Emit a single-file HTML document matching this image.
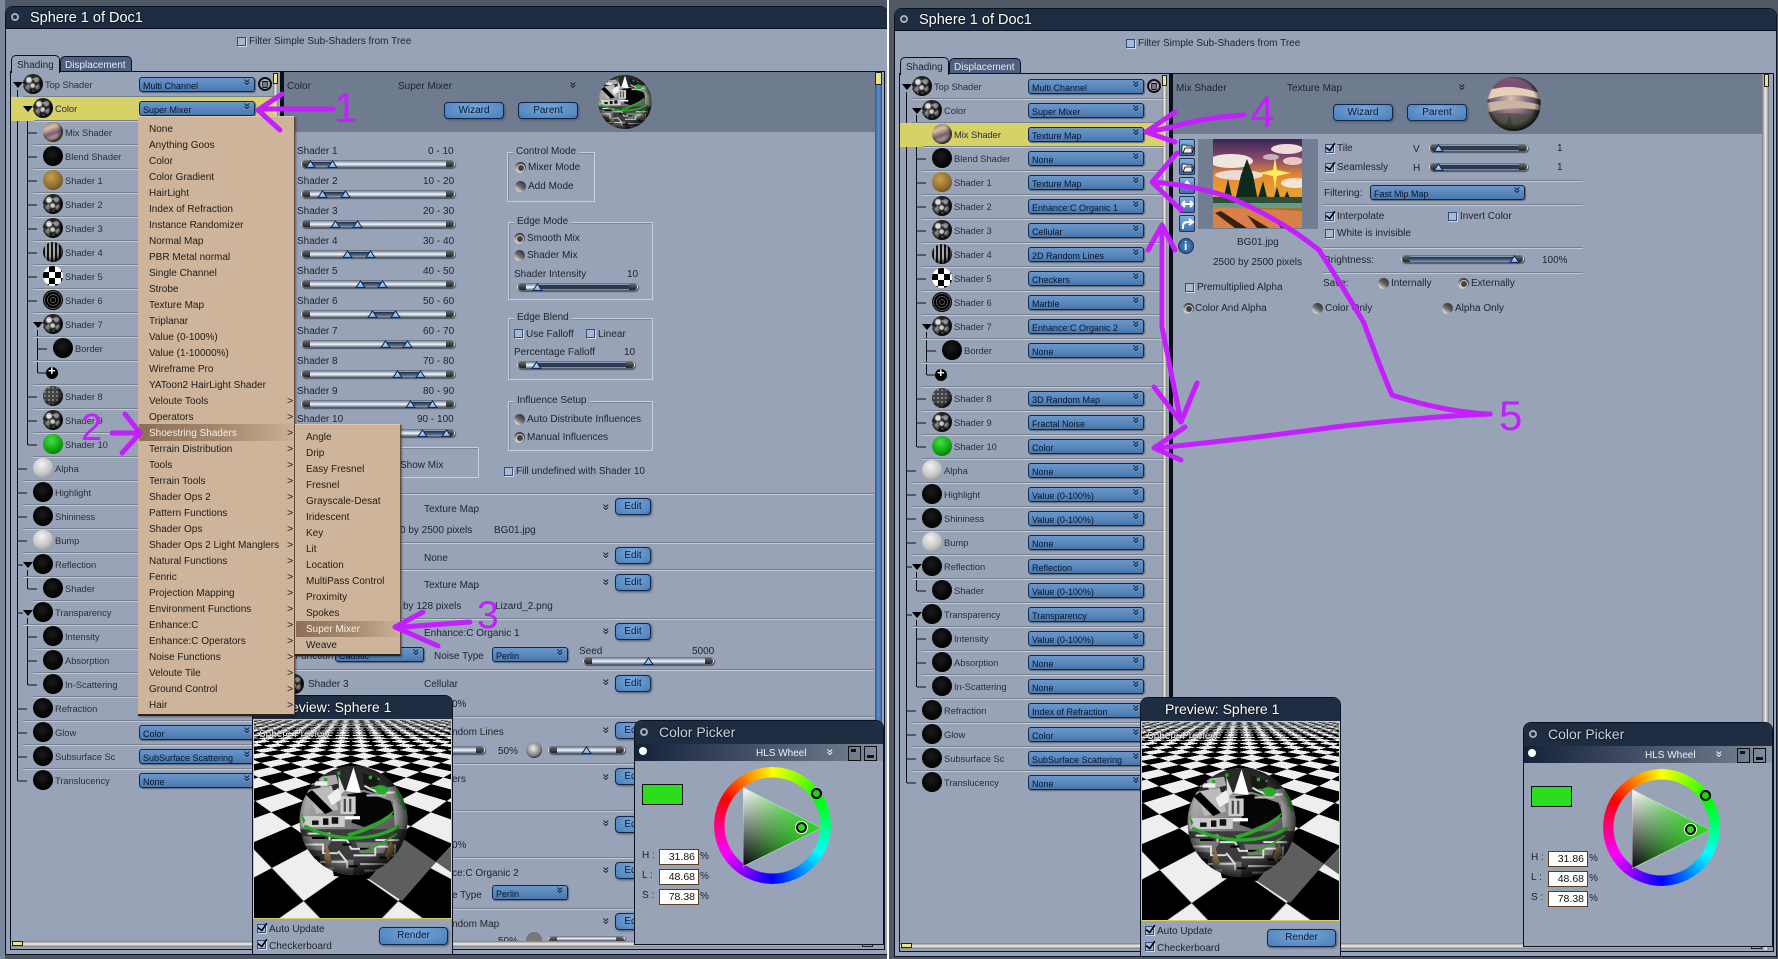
<!DOCTYPE html>
<html><head><meta charset="utf-8"><title>Sphere 1 of Doc1</title>
<style>
*{box-sizing:border-box;margin:0;padding:0}
html,body{width:1778px;height:959px;overflow:hidden;background:#505866;font:10px/14px "Liberation Sans",sans-serif;color:#20252f}
div,span,b,i,svg{position:absolute;display:block}
span{white-space:nowrap;margin-top:1px}
#root{left:0;top:0;width:1778px;height:959px;filter:blur(.35px)}
.w{width:889px;height:957px;top:0}
.win{left:5px;top:6px;width:883px;height:949px;background:#98a3b8;border:1px solid #0b1120;border-radius:8px 8px 0 0}
.tb{left:6px;top:7px;width:881px;height:22px;background:#1f2d42;border-radius:7px 7px 0 0;border-bottom:1px solid #0b1120}
.tt{left:30px;top:9px;color:#fff;font-size:14.5px;line-height:18px;text-shadow:0 0 2px #000;margin-top:0}
.o{width:8px;height:8px;border-radius:50%;border:2px solid #aab;left:11px;top:13px}
.pan{left:10px;top:71px;width:875px;height:879px;border:1px solid #0b1120}
.k{background:#0c0f16}
.r{left:0;width:275px;height:24px}
.r::after{content:"";position:absolute;left:23px;right:0;top:23px;height:2px;background:linear-gradient(#76818f 50%,#c3cbdb 50%)}
.r.d2::after{left:33px}
.r.nl::after{display:none}
.r.y{background:#d6d268;left:11px}
.r span{top:5px;color:#2a3039;font-size:9.4px;letter-spacing:-.05px;margin-top:0}
.s{top:1px;width:20px;height:20px;border-radius:50%;background:radial-gradient(circle at 45% 40%,#1a1a1a,#000 70%)}
.wh{background:radial-gradient(circle at 42% 32%,#f2f2f2,#c4c4c4 55%,#777)}
.gr{background:radial-gradient(circle at 42% 32%,#44e044,#0fa50f 55%,#064f06)}
.n{background:radial-gradient(circle at 30% 30%,#ddd 0 10%,transparent 20%),radial-gradient(circle at 68% 28%,#999 0 9%,transparent 18%),radial-gradient(circle at 48% 58%,#ccc 0 10%,transparent 20%),radial-gradient(circle at 22% 68%,#888 0 8%,transparent 16%),radial-gradient(circle at 74% 68%,#aaa 0 8%,transparent 16%),radial-gradient(circle,#888 0 18%,transparent 36%) 3px 2px/5px 6px,#242424;box-shadow:inset -2px -2px 4px #000}
.n2{background:radial-gradient(circle,#bbb 0 16%,transparent 40%) 0 0/4px 4px,#444;box-shadow:inset -2px -2px 4px #000}
.tan{background:radial-gradient(circle at 40% 35%,#c9a04c,#8a6a2c 60%,#3a2c10)}
.st{background:repeating-linear-gradient(90deg,#111 0 2px,#aaa 2px 4px);box-shadow:inset -2px -2px 4px #000}
.ch{background:repeating-conic-gradient(#000 0 25%,#fff 0 50%) 0 0/12px 12px}
.ma{background:repeating-radial-gradient(circle at 50% 50%,#000 0 2px,#555 2px 3px)}
.mx{background:linear-gradient(160deg,#8a6a80,#d8c0a0 30%,#7c5a78 55%,#c8b090 75%,#3a4038);box-shadow:inset -2px -2px 3px #222}
.dd{left:139px;top:4px;width:116px;height:15px;border:1px solid #12274a;border-radius:3px;background:linear-gradient(#6a97cc,#4a78ad);padding-left:3px;line-height:17px;font-size:9px;color:#08162c;overflow:hidden;box-shadow:1px 1px 1px #5a6578}
.dd::after{content:"»";position:absolute;right:3px;top:-3px;font-size:12px;line-height:14px;transform:rotate(90deg);color:#06122a}
.cv{font-size:12px;line-height:12px;transform:rotate(90deg);color:#111;margin-top:0}
.btn{border:1px solid #12274a;border-radius:4px;background:radial-gradient(ellipse at 50% 30%,#78a8dc,#4a7db8);text-align:center;line-height:16px;color:#0a1a33;box-shadow:1px 1px 2px #4a5568}
.hd{left:284px;top:72px;width:591px;height:60px;background:#6f7b8f}
.sl{height:8px;border-radius:4px;background:linear-gradient(#5c6678,#c8d4e6 40%,#f6f9ff 52%,#3d475a);box-shadow:1px 1px 1px #4a5464}
.sl::before,.sl::after{content:"";position:absolute;top:1px;width:8px;height:6px;background:linear-gradient(#666,#222);border-radius:3px 0 0 3px;left:1px}
.sl::after{left:auto;right:1px;border-radius:0 3px 3px 0}
.tr{top:0;width:11px;height:8px;background:#122c55;clip-path:polygon(50% 0,100% 100%,0 100%);z-index:2}
.tr::after{content:"";position:absolute;left:2px;top:2px;width:7px;height:5px;background:linear-gradient(#e8f4ff,#6da5e0);clip-path:polygon(50% 0,100% 100%,0 100%)}
.rg{top:2px;height:4px;background:linear-gradient(#1d2c45,#5a7aa5)}
.g{border:1px solid #c8d0de;box-shadow:inset 1px 1px 0 #7c8799}
.lg{background:#98a3b8;padding:0 3px}
.ra{width:11px;height:11px;border-radius:50%;background:linear-gradient(35deg,#f4f4f4 8%,#666 50%,#222)}
.ra.on::after{content:"";position:absolute;left:2px;top:2px;width:6px;height:6px;border-radius:50%;background:#444;border:1px solid #ccc}
.cb{width:9px;height:9px;border:1.5px solid #2f4f80;background:#a9b9d2;box-shadow:1px 1px 0 #d5dbe6}
.cb.on::after{content:"";position:absolute;left:1px;top:-5px;width:5px;height:10px;border-right:2px solid #000;border-bottom:2px solid #000;transform:rotate(35deg) scale(.8)}
.ln{height:2px;background:linear-gradient(#76818f 50%,#c3cbdb 50%)}
.hs{left:11px;top:941px;width:862px;height:6px;background:linear-gradient(#777,#f2f2f2 50%,#777)}
.th{background:#e8e48a;border:1px solid #222}
.blue{left:875px;top:84px;width:7px;height:860px;background:linear-gradient(90deg,#2d5a94,#5f91cc 50%,#2d5a94)}
.menu{background:#cdb49b;border-top:1px solid #ddc8b2;border-right:1px solid #5e4a38;border-bottom:2px solid #2c231b;box-shadow:1px 1px 2px #0006}
.m{left:11px;color:#1f1c18;font-size:10px}
.ar{left:149px;font-size:10.5px;color:#1f1c18}
.hl{background:linear-gradient(90deg,#8c6f56,#a68a70 55%,#c9b097)}
.pv{left:252px;top:695px;width:201px;height:260px;background:#98a3b8;border:1px solid #0b1120;border-radius:8px 8px 0 0;overflow:hidden}
.pt{left:0;top:0;width:199px;height:23px;background:#1f2d42}
.ptt{left:24px;top:2px;color:#fff;font-size:14px;line-height:18px;text-shadow:0 0 2px #000;margin-top:0}
.pa{left:0;top:23px;width:199px;height:200px;overflow:hidden;border:1px solid #d8d060;background:#999}
.pl{left:-1919px;top:-1868px;width:4032px;height:4032px;background:repeating-conic-gradient(#eee 0 25%,#000 0 50%) 0 0/112px 112px;transform:perspective(173px) rotateX(45.6deg) rotateZ(45deg);filter:blur(.7px)}
.cp{left:634px;top:720px;width:250px;height:225px;background:#98a3b8;border:1px solid #0b1120;border-radius:8px 8px 0 0;overflow:hidden}
.cp span{margin-top:0}
.in{left:24px;width:40px;height:16px;background:#fff;border:1px solid #5a3e22;text-align:right;padding-right:3px;line-height:15px;font-size:10.5px;color:#111}
.ic{left:0;width:16px;height:17px;background:linear-gradient(#7fb0e4,#3f6ea8);border:1px solid #1c355e;border-radius:2px}
</style></head><body>
<svg width="0" height="0" style="left:0;top:0"><defs>
<linearGradient id="og" x1="0" y1="0" x2="1" y2="1"><stop offset="0" stop-color="#ccc"/><stop offset=".5" stop-color="#777"/><stop offset="1" stop-color="#333"/></linearGradient>
<radialGradient id="ov" cx=".47" cy=".45" r=".56"><stop offset=".75" stop-color="#000" stop-opacity="0"/><stop offset="1" stop-color="#000" stop-opacity=".8"/></radialGradient>
<clipPath id="oc"><ellipse cx="50" cy="50" rx="49.500" ry="50"/></clipPath>
<linearGradient id="tw" x1="0" y1="0" x2="0" y2="1"><stop offset="0" stop-color="#fff"/><stop offset="1" stop-color="#000"/></linearGradient>
<linearGradient id="tg" x1="0" y1="0" x2="1" y2="0"><stop offset="0" stop-color="#22e014" stop-opacity="0"/><stop offset="1" stop-color="#22e014"/></linearGradient>
<linearGradient id="sk" x1="0" y1="0" x2="0" y2="1"><stop offset="0" stop-color="#3a2456"/><stop offset=".22" stop-color="#8a4a6a"/><stop offset=".42" stop-color="#e88a30"/><stop offset=".62" stop-color="#e8a030"/><stop offset="1" stop-color="#40402c"/></linearGradient>
<radialGradient id="mz" cx=".45" cy=".4" r=".6"><stop offset="0" stop-color="#d8c4a8"/><stop offset=".5" stop-color="#8a6a84"/><stop offset="1" stop-color="#2a2a28"/></radialGradient>
<symbol id="orb" viewBox="0 0 100 100"><g clip-path="url(#oc)">
<rect width="100" height="100" fill="url(#og)"/>
<path d="M0 0H100V22H0Z" fill="#2a2a2a"/>
<path d="M50 1L43 23 57 25Z" fill="#fff"/><path d="M36 8L42 23 37 27Z" fill="#ddd"/><path d="M58 6L74 12 70 25 60 22Z" fill="#181818"/><path d="M18 10L34 8 36 16 20 20Z" fill="#aaa"/><path d="M14 14h12v4h-12z" fill="#eee"/>
<path d="M8 22L30 18 36 40 16 44Z" fill="#bbb"/><path d="M6 26L24 44 31 41 12 22Z" fill="#000"/><path d="M26 28l10-8 4 10-10 6z" fill="#eee"/>
<path d="M66 22L92 18 96 34 80 32Z" fill="#8a8a8a"/>
<path d="M44 26L60 24 84 32 88 44 60 56 48 52 52 40Z" fill="#050505"/>
<path d="M38 28h14v16h-14z" fill="#ccc"/><path d="M41 30h2v12h-2zM46 30h2v12h-2z" fill="#444"/><path d="M34 46h22v3h-22z" fill="#fff"/>
<path d="M60 18Q72 26 88 24" fill="none" stroke="#ddd" stroke-width="2"/><path d="M62 26h18v2h-18z" fill="#bbb"/>
<path d="M86 30L100 40 100 60 88 56Z" fill="#999"/>
<path d="M2 46H42V56H2Z" fill="#ccc"/><path d="M22 48h5v6h-5zM30 47h6v6h-6zM12 50h6v4h-6z" fill="#111"/>
<path d="M0 58H100V100H0Z" fill="#3c3c3c"/><path d="M4 64L30 68 24 78 2 76ZM52 70h30l-4 10H56ZM24 86h26v14H24Z" fill="#777"/>
<path d="M8 62h20v6M4 72h18v8h14M30 68h14l4 8h16M50 82h20v-8h14M14 88h30v6M56 90h24M70 68h22M88 72v10h-8M36 78l8 10M20 94h12M60 96h14" fill="none" stroke="#ddd" stroke-width="1.800"/>
<path d="M12 66h12M8 84h10v6M40 72h8M56 76h10M74 84h10M46 92h8" fill="none" stroke="#000" stroke-width="2"/>
<path d="M26 72l4 16-5 6-2-10z" fill="#8a7048"/><path d="M84 68l4 8-6 12-3-6z" fill="#8a7048"/>
<path d="M5 55Q22 64 44 66Q72 67 92 55" fill="none" stroke="#2aa82a" stroke-width="3"/><path d="M44 62Q60 58 70 52Q80 47 88 40L84 47Q70 58 46 65Z" fill="#2aa82a"/><path d="M60 78Q76 72 90 62" fill="none" stroke="#2aa82a" stroke-width="1.500"/><path d="M90 22L97 40" stroke="#2aa82a" stroke-width="2.500"/><path d="M2 44l4 6-2 3z" fill="#2aa82a"/>
<path d="M69 19q6-3 11 0t-2 7q-7 1-9-7zM35 5h3v3h-3zM23 11h3v3h-3zM64 9h3v3h-3zM72 11h2v2h-2zM66 19h3v2h-3z" fill="#2aa82a"/>
<ellipse cx="50" cy="50" rx="49.500" ry="50" fill="url(#ov)"/></g></symbol>
<symbol id="mix" viewBox="0 0 100 100"><g clip-path="url(#oc)"><rect width="100" height="100" fill="url(#mz)"/>
<path d="M0 25Q40 10 100 30L100 42Q50 25 0 42Z" fill="#e4d0b8"/><path d="M0 48Q50 38 100 52L100 62Q50 52 0 66Z" fill="#c8b4a0"/><path d="M5 12Q40 0 80 12L70 22Q40 14 14 22Z" fill="#7a4e70"/><path d="M30 100L42 72 52 100Z" fill="#122"/><path d="M0 70Q50 62 100 74L100 100 0 100Z" fill="#4a5040" opacity=".7"/>
<ellipse cx="50" cy="50" rx="49.500" ry="50" fill="url(#ov)"/></g></symbol>
<symbol id="tri" viewBox="0 0 77 78"><polygon points="0,0 77,40 0,78" fill="url(#tw)" stroke="#dde" stroke-width=".7"/><polygon points="0,0 77,40 0,78" fill="url(#tg)"/></symbol>
<symbol id="bin" viewBox="0 0 14 14"><circle cx="7" cy="7" r="7" fill="#111"/><circle cx="7" cy="7" r="5" fill="#aab"/><path d="M4 4.500h6M4.500 5.500l.5 5h4l.5-5" fill="#222" stroke="#111"/><path d="M6 6v4M8 6v4" stroke="#ccd"/></symbol>
</defs></svg>
<div id="root">
<div style="left:0;top:0;width:5px;height:959px;background:#7c8899"></div>

<!-- LEFT WINDOW -->
<div class="w" style="left:0">
<div class="win"></div><div class="tb"></div><div class="o"></div><span class="tt">Sphere 1 of Doc1</span>
<div class="cb" style="left:237px;top:37px"></div><span style="left:249px;top:34px">Filter Simple Sub-Shaders from Tree</span>
<div style="left:60px;top:56px;width:72px;height:16px;background:#4f6080;border:1px solid #0b1120;border-radius:5px 5px 0 0"></div><span style="left:65px;top:58px;color:#e6eaf2">Displacement</span>
<div class="pan"></div>
<div style="left:11px;top:55px;width:49px;height:18px;background:#98a3b8;border:1px solid #0b1120;border-bottom:0;border-radius:5px 5px 0 0"></div><span style="left:17px;top:58px">Shading</span>
<div style="left:273px;top:73px;width:5px;height:875px;background:linear-gradient(90deg,#777,#eee,#777)"></div><div class="th" style="left:273px;top:73px;width:5px;height:11px"></div>
<div class="k" style="left:280px;top:72px;width:4px;height:877px"></div>
<div class="k" style="left:17px;top:90px;width:1px;height:691px"></div><div class="k" style="left:27px;top:113px;width:1px;height:332px"></div><div class="k" style="left:37px;top:330px;width:1px;height:43px"></div><div class="k" style="left:27px;top:570px;width:1px;height:19px"></div><div class="k" style="left:27px;top:618px;width:1px;height:67px"></div>
<div class="r" style="top:73px"><i class="s n" style="left:23px"></i><span style="left:45px">Top Shader</span><div class="dd">Multi Channel</div></div>
<div class="r y" style="top:97px;width:264px"><i class="s n" style="left:22px"></i><span style="left:44px">Color</span><div class="dd" style="left:128px">Super Mixer</div></div>
<div class="r d2" style="top:121px"><i class="s mx" style="left:43px"></i><span style="left:65px">Mix Shader</span></div>
<div class="r d2" style="top:145px"><i class="s" style="left:43px"></i><span style="left:65px">Blend Shader</span></div>
<div class="r d2" style="top:169px"><i class="s tan" style="left:43px"></i><span style="left:65px">Shader 1</span></div>
<div class="r d2" style="top:193px"><i class="s n" style="left:43px"></i><span style="left:65px">Shader 2</span></div>
<div class="r d2" style="top:217px"><i class="s n" style="left:43px"></i><span style="left:65px">Shader 3</span></div>
<div class="r d2" style="top:241px"><i class="s st" style="left:43px"></i><span style="left:65px">Shader 4</span></div>
<div class="r d2" style="top:265px"><i class="s ch" style="left:43px"></i><span style="left:65px">Shader 5</span></div>
<div class="r d2" style="top:289px"><i class="s ma" style="left:43px"></i><span style="left:65px">Shader 6</span></div>
<div class="r d2" style="top:313px"><i class="s n" style="left:43px"></i><span style="left:65px">Shader 7</span></div>
<div class="r d2" style="top:337px"><i class="s" style="left:53px"></i><span style="left:75px">Border</span></div>
<div class="r d2" style="top:361px"><i class="s" style="left:46px;top:6px;width:12px;height:12px;background:#000;border:2px solid #000"></i><span style="left:48px;top:3px;color:#fff;font-size:13px;font-weight:bold">+</span></div>
<div class="r d2" style="top:385px"><i class="s n2" style="left:43px"></i><span style="left:65px">Shader 8</span></div>
<div class="r d2" style="top:409px"><i class="s n" style="left:43px"></i><span style="left:65px">Shader 9</span></div>
<div class="r d2" style="top:433px"><i class="s gr" style="left:43px"></i><span style="left:65px">Shader 10</span></div>
<div class="r" style="top:457px"><i class="s wh" style="left:33px"></i><span style="left:55px">Alpha</span></div>
<div class="r" style="top:481px"><i class="s" style="left:33px"></i><span style="left:55px">Highlight</span></div>
<div class="r" style="top:505px"><i class="s" style="left:33px"></i><span style="left:55px">Shininess</span></div>
<div class="r" style="top:529px"><i class="s wh" style="left:33px"></i><span style="left:55px">Bump</span></div>
<div class="r" style="top:553px"><i class="s" style="left:33px"></i><span style="left:55px">Reflection</span></div>
<div class="r d2" style="top:577px"><i class="s" style="left:43px"></i><span style="left:65px">Shader</span></div>
<div class="r" style="top:601px"><i class="s" style="left:33px"></i><span style="left:55px">Transparency</span></div>
<div class="r d2" style="top:625px"><i class="s" style="left:43px"></i><span style="left:65px">Intensity</span></div>
<div class="r d2" style="top:649px"><i class="s" style="left:43px"></i><span style="left:65px">Absorption</span></div>
<div class="r d2" style="top:673px"><i class="s" style="left:43px"></i><span style="left:65px">In-Scattering</span></div>
<div class="r" style="top:697px"><i class="s" style="left:33px"></i><span style="left:55px">Refraction</span></div>
<div class="r" style="top:721px"><i class="s" style="left:33px"></i><span style="left:55px">Glow</span><div class="dd">Color</div></div>
<div class="r" style="top:745px"><i class="s" style="left:33px"></i><span style="left:55px">Subsurface Sc</span><div class="dd">SubSurface Scattering</div></div>
<div class="r nl" style="top:769px"><i class="s" style="left:33px"></i><span style="left:55px">Translucency</span><div class="dd">None</div></div>
<svg style="left:0;top:0" width="60" height="800"><path d="M13 82h10l-5 6zM23 106h10l-5 6zM33 322h10l-5 6zM23 562h10l-5 6zM23 610h10l-5 6z" fill="#000"/><path d="M18 469h9M18 493h9M18 517h9M18 541h9M18 565h5M18 613h5M18 709h9M18 733h9M18 757h9M18 781h9M28 133h9M28 157h9M28 181h9M28 205h9M28 229h9M28 253h9M28 277h9M28 301h9M28 397h9M28 421h9M28 445h9M28 589h9M28 637h9M28 661h9M28 685h9M38 349h9M38 373h9" stroke="#0c0f16" fill="none"/></svg>
<svg style="left:258px;top:77px" width="14" height="14"><use href="#bin"/></svg>

<div class="hd"></div>
<span style="left:287px;top:79px">Color</span><span style="left:398px;top:79px">Super Mixer</span><span class="cv" style="left:570px;top:79px">»</span>
<div class="btn" style="left:444px;top:102px;width:60px;height:17px">Wizard</div><div class="btn" style="left:518px;top:102px;width:60px;height:17px">Parent</div>
<svg style="left:598px;top:75px" width="54" height="54"><use href="#orb"/></svg>

<span style="left:297px;top:144px">Shader 1</span><span style="left:428px;top:144px">0 - 10</span>
<div class="sl" style="left:301px;top:160px;width:154px"><i class="rg" style="left:9px;width:22px"></i><b class="tr" style="left:4px"></b><b class="tr" style="left:26px"></b></div>
<span style="left:297px;top:174px">Shader 2</span><span style="left:423px;top:174px">10 - 20</span>
<div class="sl" style="left:301px;top:190px;width:154px"><i class="rg" style="left:21px;width:23px"></i><b class="tr" style="left:16px"></b><b class="tr" style="left:39px"></b></div>
<span style="left:297px;top:204px">Shader 3</span><span style="left:423px;top:204px">20 - 30</span>
<div class="sl" style="left:301px;top:220px;width:154px"><i class="rg" style="left:34px;width:22px"></i><b class="tr" style="left:29px"></b><b class="tr" style="left:51px"></b></div>
<span style="left:297px;top:234px">Shader 4</span><span style="left:423px;top:234px">30 - 40</span>
<div class="sl" style="left:301px;top:250px;width:154px"><i class="rg" style="left:46px;width:23px"></i><b class="tr" style="left:41px"></b><b class="tr" style="left:64px"></b></div>
<span style="left:297px;top:264px">Shader 5</span><span style="left:423px;top:264px">40 - 50</span>
<div class="sl" style="left:301px;top:280px;width:154px"><i class="rg" style="left:59px;width:22px"></i><b class="tr" style="left:54px"></b><b class="tr" style="left:76px"></b></div>
<span style="left:297px;top:294px">Shader 6</span><span style="left:423px;top:294px">50 - 60</span>
<div class="sl" style="left:301px;top:310px;width:154px"><i class="rg" style="left:71px;width:23px"></i><b class="tr" style="left:66px"></b><b class="tr" style="left:89px"></b></div>
<span style="left:297px;top:324px">Shader 7</span><span style="left:423px;top:324px">60 - 70</span>
<div class="sl" style="left:301px;top:340px;width:154px"><i class="rg" style="left:84px;width:22px"></i><b class="tr" style="left:79px"></b><b class="tr" style="left:101px"></b></div>
<span style="left:297px;top:354px">Shader 8</span><span style="left:423px;top:354px">70 - 80</span>
<div class="sl" style="left:301px;top:370px;width:154px"><i class="rg" style="left:96px;width:23px"></i><b class="tr" style="left:91px"></b><b class="tr" style="left:114px"></b></div>
<span style="left:297px;top:384px">Shader 9</span><span style="left:423px;top:384px">80 - 90</span>
<div class="sl" style="left:301px;top:400px;width:154px"><i class="rg" style="left:109px;width:22px"></i><b class="tr" style="left:104px"></b><b class="tr" style="left:126px"></b></div>
<span style="left:297px;top:412px">Shader 10</span><span style="left:417px;top:412px">90 - 100</span>
<div class="sl" style="left:301px;top:429px;width:154px"><i class="rg" style="left:121px;width:24px"></i><b class="tr" style="left:116px"></b><b class="tr" style="left:140px"></b></div>
<div class="g" style="left:300px;top:447px;width:179px;height:31px"></div><span style="left:400px;top:458px">Show Mix</span>

<div class="g" style="left:507px;top:152px;width:88px;height:50px"></div><span class="lg" style="left:513px;top:144px">Control Mode</span>
<i class="ra on" style="left:515px;top:162px"></i><span style="left:528px;top:160px">Mixer Mode</span><i class="ra" style="left:515px;top:181px"></i><span style="left:528px;top:179px">Add Mode</span>
<div class="g" style="left:508px;top:222px;width:145px;height:78px"></div><span class="lg" style="left:514px;top:214px">Edge Mode</span>
<i class="ra on" style="left:514px;top:233px"></i><span style="left:527px;top:231px">Smooth Mix</span><i class="ra" style="left:514px;top:250px"></i><span style="left:527px;top:248px">Shader Mix</span>
<span style="left:514px;top:267px">Shader Intensity</span><span style="left:627px;top:267px">10</span>
<div class="sl" style="left:517px;top:283px;width:121px"><i class="rg" style="left:20px;width:97px;background:#2a3a55"></i><b class="tr" style="left:15px"></b></div>
<div class="g" style="left:508px;top:318px;width:145px;height:62px"></div><span class="lg" style="left:514px;top:310px">Edge Blend</span>
<i class="cb" style="left:514px;top:329px"></i><span style="left:526px;top:327px">Use Falloff</span><i class="cb" style="left:586px;top:329px"></i><span style="left:598px;top:327px">Linear</span>
<span style="left:514px;top:345px">Percentage Falloff</span><span style="left:624px;top:345px">10</span>
<div class="sl" style="left:517px;top:361px;width:118px"><i class="rg" style="left:19px;width:95px;background:#2a3a55"></i><b class="tr" style="left:14px"></b></div>
<div class="g" style="left:508px;top:401px;width:145px;height:50px"></div><span class="lg" style="left:514px;top:393px">Influence Setup</span>
<i class="ra" style="left:514px;top:414px"></i><span style="left:527px;top:412px">Auto Distribute Influences</span><i class="ra on" style="left:514px;top:432px"></i><span style="left:527px;top:430px">Manual Influences</span>
<i class="cb" style="left:504px;top:467px"></i><span style="left:516px;top:464px">Fill undefined with Shader 10</span>

<div class="ln" style="left:284px;top:493px;width:590px"></div><div class="ln" style="left:284px;top:542px;width:590px"></div><div class="ln" style="left:284px;top:569px;width:590px"></div><div class="ln" style="left:284px;top:618px;width:590px"></div><div class="ln" style="left:284px;top:669px;width:590px"></div><div class="ln" style="left:284px;top:716px;width:590px"></div><div class="ln" style="left:284px;top:763px;width:590px"></div><div class="ln" style="left:284px;top:810px;width:590px"></div><div class="ln" style="left:284px;top:857px;width:590px"></div><div class="ln" style="left:284px;top:908px;width:590px"></div>

<span style="left:424px;top:502px">Texture Map</span><span class="cv" style="left:603px;top:501px">»</span><div class="btn" style="left:615px;top:498px;width:36px;height:17px">Edit</div>
<span style="left:400px;top:523px">0 by 2500 pixels</span><span style="left:494px;top:523px">BG01.jpg</span>
<span style="left:424px;top:551px">None</span><span class="cv" style="left:603px;top:549px">»</span><div class="btn" style="left:615px;top:547px;width:36px;height:17px">Edit</div>
<span style="left:424px;top:578px">Texture Map</span><span class="cv" style="left:603px;top:576px">»</span><div class="btn" style="left:615px;top:574px;width:36px;height:17px">Edit</div>
<span style="left:403px;top:599px">by 128 pixels</span><span style="left:495px;top:599px">Lizard_2.png</span>
<span style="left:424px;top:626px">Enhance:C Organic 1</span><span class="cv" style="left:603px;top:625px">»</span><div class="btn" style="left:615px;top:623px;width:36px;height:17px">Edit</div>
<span style="left:295px;top:649px">Function</span><div class="dd" style="left:335px;top:647px;width:89px">Caustic</div><span style="left:434px;top:649px">Noise Type</span><div class="dd" style="left:492px;top:647px;width:76px">Perlin</div>
<span style="left:579px;top:644px">Seed</span><span style="left:692px;top:644px">5000</span>
<div class="sl" style="left:583px;top:657px;width:131px"><b class="tr" style="left:60px"></b></div>
<i class="s n" style="left:284px;top:674px"></i><span style="left:308px;top:677px">Shader 3</span><span style="left:424px;top:677px">Cellular</span><span class="cv" style="left:603px;top:676px">»</span><div class="btn" style="left:615px;top:675px;width:36px;height:17px">Edit</div>
<span style="left:452px;top:697px">0%</span>
<span style="left:452px;top:725px">ndom Lines</span><span class="cv" style="left:603px;top:724px">»</span><div class="btn" style="left:615px;top:722px;width:36px;height:17px">Edit</div>
<div class="sl" style="left:440px;top:746px;width:45px"></div><span style="left:498px;top:744px">50%</span>
<i style="left:526px;top:742px;width:16px;height:16px;border-radius:50%;background:radial-gradient(circle at 45% 40%,#eee,#777 60%,#222 75%,transparent 80%)"></i>
<div class="sl" style="left:548px;top:746px;width:77px"><b class="tr" style="left:33px"></b></div>
<span style="left:452px;top:772px">ers</span><span class="cv" style="left:603px;top:771px">»</span><div class="btn" style="left:615px;top:768px;width:36px;height:17px">Edit</div>
<span class="cv" style="left:603px;top:817px">»</span><div class="btn" style="left:615px;top:816px;width:36px;height:17px">Edit</div>
<span style="left:452px;top:838px">0%</span>
<span style="left:452px;top:866px">ce:C Organic 2</span><span class="cv" style="left:603px;top:864px">»</span><div class="btn" style="left:615px;top:862px;width:36px;height:17px">Edit</div>
<span style="left:452px;top:888px">e Type</span><div class="dd" style="left:492px;top:885px;width:76px">Perlin</div>
<span style="left:452px;top:917px">ndom Map</span><span class="cv" style="left:603px;top:915px">»</span><div class="btn" style="left:615px;top:913px;width:36px;height:17px">Edit</div>
<span style="left:498px;top:934px">50%</span><i style="left:526px;top:932px;width:16px;height:9px;overflow:hidden;border-radius:8px 8px 0 0;background:#777"></i><div class="sl" style="left:548px;top:936px;width:77px;height:5px"></div>

<div class="blue"></div><div class="th" style="left:875px;top:72px;width:7px;height:13px"></div>
<div class="hs"></div><div class="th" style="left:12px;top:941px;width:11px;height:5px"></div><div class="th" style="left:862px;top:943px;width:11px;height:4px;background:#b4ae40"></div>
</div>

<!-- RIGHT WINDOW -->
<div class="w" style="left:889px;top:2px">
<div class="win"></div><div class="tb"></div><div class="o"></div><span class="tt">Sphere 1 of Doc1</span>
<div class="cb" style="left:237px;top:37px"></div><span style="left:249px;top:34px">Filter Simple Sub-Shaders from Tree</span>
<div style="left:60px;top:56px;width:72px;height:16px;background:#4f6080;border:1px solid #0b1120;border-radius:5px 5px 0 0"></div><span style="left:65px;top:58px;color:#e6eaf2">Displacement</span>
<div class="pan"></div>
<div style="left:11px;top:55px;width:49px;height:18px;background:#98a3b8;border:1px solid #0b1120;border-bottom:0;border-radius:5px 5px 0 0"></div><span style="left:17px;top:58px">Shading</span>
<div style="left:273px;top:73px;width:5px;height:875px;background:linear-gradient(90deg,#777,#eee,#777)"></div><div class="th" style="left:273px;top:73px;width:5px;height:11px"></div>
<div class="k" style="left:280px;top:72px;width:4px;height:877px"></div>
<div class="k" style="left:17px;top:90px;width:1px;height:691px"></div><div class="k" style="left:27px;top:113px;width:1px;height:332px"></div><div class="k" style="left:37px;top:330px;width:1px;height:43px"></div><div class="k" style="left:27px;top:570px;width:1px;height:19px"></div><div class="k" style="left:27px;top:618px;width:1px;height:67px"></div>
<div class="r" style="top:73px"><i class="s n" style="left:23px"></i><span style="left:45px">Top Shader</span><div class="dd">Multi Channel</div></div>
<div class="r" style="top:97px"><i class="s n" style="left:33px"></i><span style="left:55px">Color</span><div class="dd">Super Mixer</div></div>
<div class="r y" style="top:121px;width:264px"><i class="s mx" style="left:32px"></i><span style="left:54px">Mix Shader</span><div class="dd" style="left:128px">Texture Map</div></div>
<div class="r d2" style="top:145px"><i class="s" style="left:43px"></i><span style="left:65px">Blend Shader</span><div class="dd">None</div></div>
<div class="r d2" style="top:169px"><i class="s tan" style="left:43px"></i><span style="left:65px">Shader 1</span><div class="dd">Texture Map</div></div>
<div class="r d2" style="top:193px"><i class="s n" style="left:43px"></i><span style="left:65px">Shader 2</span><div class="dd">Enhance:C Organic 1</div></div>
<div class="r d2" style="top:217px"><i class="s n" style="left:43px"></i><span style="left:65px">Shader 3</span><div class="dd">Cellular</div></div>
<div class="r d2" style="top:241px"><i class="s st" style="left:43px"></i><span style="left:65px">Shader 4</span><div class="dd">2D Random Lines</div></div>
<div class="r d2" style="top:265px"><i class="s ch" style="left:43px"></i><span style="left:65px">Shader 5</span><div class="dd">Checkers</div></div>
<div class="r d2" style="top:289px"><i class="s ma" style="left:43px"></i><span style="left:65px">Shader 6</span><div class="dd">Marble</div></div>
<div class="r d2" style="top:313px"><i class="s n" style="left:43px"></i><span style="left:65px">Shader 7</span><div class="dd">Enhance:C Organic 2</div></div>
<div class="r d2" style="top:337px"><i class="s" style="left:53px"></i><span style="left:75px">Border</span><div class="dd">None</div></div>
<div class="r d2" style="top:361px"><i class="s" style="left:46px;top:6px;width:12px;height:12px;background:#000;border:2px solid #000"></i><span style="left:48px;top:3px;color:#fff;font-size:13px;font-weight:bold">+</span></div>
<div class="r d2" style="top:385px"><i class="s n2" style="left:43px"></i><span style="left:65px">Shader 8</span><div class="dd">3D Random Map</div></div>
<div class="r d2" style="top:409px"><i class="s n" style="left:43px"></i><span style="left:65px">Shader 9</span><div class="dd">Fractal Noise</div></div>
<div class="r d2" style="top:433px"><i class="s gr" style="left:43px"></i><span style="left:65px">Shader 10</span><div class="dd">Color</div></div>
<div class="r" style="top:457px"><i class="s wh" style="left:33px"></i><span style="left:55px">Alpha</span><div class="dd">None</div></div>
<div class="r" style="top:481px"><i class="s" style="left:33px"></i><span style="left:55px">Highlight</span><div class="dd">Value (0-100%)</div></div>
<div class="r" style="top:505px"><i class="s" style="left:33px"></i><span style="left:55px">Shininess</span><div class="dd">Value (0-100%)</div></div>
<div class="r" style="top:529px"><i class="s wh" style="left:33px"></i><span style="left:55px">Bump</span><div class="dd">None</div></div>
<div class="r" style="top:553px"><i class="s" style="left:33px"></i><span style="left:55px">Reflection</span><div class="dd">Reflection</div></div>
<div class="r d2" style="top:577px"><i class="s" style="left:43px"></i><span style="left:65px">Shader</span><div class="dd">Value (0-100%)</div></div>
<div class="r" style="top:601px"><i class="s" style="left:33px"></i><span style="left:55px">Transparency</span><div class="dd">Transparency</div></div>
<div class="r d2" style="top:625px"><i class="s" style="left:43px"></i><span style="left:65px">Intensity</span><div class="dd">Value (0-100%)</div></div>
<div class="r d2" style="top:649px"><i class="s" style="left:43px"></i><span style="left:65px">Absorption</span><div class="dd">None</div></div>
<div class="r d2" style="top:673px"><i class="s" style="left:43px"></i><span style="left:65px">In-Scattering</span><div class="dd">None</div></div>
<div class="r" style="top:697px"><i class="s" style="left:33px"></i><span style="left:55px">Refraction</span><div class="dd">Index of Refraction</div></div>
<div class="r" style="top:721px"><i class="s" style="left:33px"></i><span style="left:55px">Glow</span><div class="dd">Color</div></div>
<div class="r" style="top:745px"><i class="s" style="left:33px"></i><span style="left:55px">Subsurface Sc</span><div class="dd">SubSurface Scattering</div></div>
<div class="r nl" style="top:769px"><i class="s" style="left:33px"></i><span style="left:55px">Translucency</span><div class="dd">None</div></div>
<svg style="left:0;top:0" width="60" height="800"><path d="M13 82h10l-5 6zM23 106h10l-5 6zM33 322h10l-5 6zM23 562h10l-5 6zM23 610h10l-5 6z" fill="#000"/><path d="M18 469h9M18 493h9M18 517h9M18 541h9M18 565h5M18 613h5M18 709h9M18 733h9M18 757h9M18 781h9M28 157h9M28 181h9M28 205h9M28 229h9M28 253h9M28 277h9M28 301h9M28 397h9M28 421h9M28 445h9M28 589h9M28 637h9M28 661h9M28 685h9M38 349h9M38 373h9" stroke="#0c0f16" fill="none"/></svg>
<svg style="left:258px;top:77px" width="14" height="14"><use href="#bin"/></svg>
<div class="hd"></div>
<span style="left:287px;top:79px">Mix Shader</span><span style="left:398px;top:79px">Texture Map</span><span class="cv" style="left:570px;top:79px">»</span>
<div class="btn" style="left:444px;top:102px;width:60px;height:17px">Wizard</div><div class="btn" style="left:518px;top:102px;width:60px;height:17px">Parent</div>
<svg style="left:598px;top:75px" width="54" height="54"><use href="#mix"/></svg>
<div style="left:873px;top:72px;width:7px;height:876px;background:linear-gradient(90deg,#777,#eee,#777)"></div><div class="th" style="left:875px;top:72px;width:5px;height:13px"></div>
<div class="hs"></div><div class="th" style="left:12px;top:941px;width:11px;height:5px"></div><div class="th" style="left:862px;top:943px;width:11px;height:4px;background:#b4ae40"></div>
</div>

<!-- RIGHT CONTENT (absolute) -->
<div style="left:1198px;top:139px;width:120px;height:90px;background:#717d90"></div>
<svg style="left:1213px;top:139px" width="89" height="89" viewBox="0 0 89 89"><rect width="89" height="89" fill="url(#sk)"/><ellipse cx="18" cy="22" rx="22" ry="7" fill="#f0e6e0"/><ellipse cx="26" cy="36" rx="24" ry="5" fill="#eadcd4"/><ellipse cx="74" cy="10" rx="16" ry="5" fill="#f0dcd8"/><ellipse cx="80" cy="22" rx="10" ry="4" fill="#e8c8c0"/><ellipse cx="82" cy="44" rx="14" ry="5" fill="#f4e4d4"/><ellipse cx="58" cy="18" rx="8" ry="3" fill="#c8b0c0"/><path d="M62 18L64 31 78 34 64 37 62 50 60 37 46 34 60 31Z" fill="#ffec60"/><path d="M10 62L15 40 20 62ZM22 62L28 36 34 20 40 36 45 62ZM44 62L50 42 55 62ZM60 62L64 48 68 62ZM70 62L74 52 78 62Z" fill="#0e2a1c"/><rect y="58" width="89" height="8" fill="#2e4e3a"/><rect y="64" width="89" height="5" fill="#6a9a84"/><path d="M0 68L89 72V89H0Z" fill="#d8804a"/><path d="M8 72L34 89H22L2 74ZM34 76l22 13H44ZM60 78l14 11h-6Z" fill="#3a2010"/></svg>
<div class="ic" style="left:1179px;top:139px"></div><div class="ic" style="left:1179px;top:158px"></div><div class="ic" style="left:1179px;top:177px"></div><div class="ic" style="left:1179px;top:196px"></div><div class="ic" style="left:1179px;top:215px"></div>
<svg style="left:1179px;top:139px" width="17" height="95"><path d="M3 6h4l1 1h5v7H3zM4 14l2-5h9l-2 5z" fill="#eee" stroke="#000" stroke-width=".8"/><path d="M3 25h4l1 1h5v7H3zM4 33l2-5h9l-2 5z" fill="#eee" stroke="#000" stroke-width=".8"/><path d="M8 41l4 5H4z" fill="#fff"/><path d="M3 65h11M3 65l3-3M3 65l3 3M14 65l-3-3M14 65l-3 3" stroke="#fff" stroke-width="2" fill="none"/><path d="M4 90v-3q0-4 5-4h3M10 80l4 3-4 3" stroke="#fff" stroke-width="2" fill="none"/></svg>
<i style="left:1178px;top:238px;width:16px;height:16px;border-radius:50%;background:radial-gradient(#4c84c6,#27507f);border:1px solid #1c355e"></i><span style="left:1184px;top:238px;color:#fff;font-weight:bold;font-size:12px">i</span>
<span style="left:1237px;top:235px">BG01.jpg</span><span style="left:1213px;top:255px">2500 by 2500 pixels</span>
<i class="cb" style="left:1185px;top:283px"></i><span style="left:1197px;top:280px">Premultiplied Alpha</span>
<i class="ra on" style="left:1183px;top:303px"></i><span style="left:1195px;top:301px">Color And Alpha</span><i class="ra" style="left:1312px;top:303px"></i><span style="left:1325px;top:301px">Color Only</span><i class="ra" style="left:1442px;top:303px"></i><span style="left:1455px;top:301px">Alpha Only</span>
<i class="cb on" style="left:1325px;top:144px"></i><span style="left:1337px;top:141px">Tile</span><span style="left:1413px;top:142px">V</span>
<div class="sl" style="left:1429px;top:144px;width:99px"><i class="rg" style="left:9px;width:82px;background:#2a3a55"></i><b class="tr" style="left:4px"></b></div><span style="left:1557px;top:141px">1</span>
<i class="cb on" style="left:1325px;top:163px"></i><span style="left:1337px;top:160px">Seamlessly</span><span style="left:1413px;top:161px">H</span>
<div class="sl" style="left:1429px;top:163px;width:99px"><i class="rg" style="left:9px;width:82px;background:#2a3a55"></i><b class="tr" style="left:4px"></b></div><span style="left:1557px;top:160px">1</span>
<div class="ln" style="left:1323px;top:180px;width:260px"></div>
<span style="left:1324px;top:186px">Filtering:</span><div class="dd" style="left:1370px;top:185px;width:155px">Fast Mip Map</div>
<div class="ln" style="left:1323px;top:204px;width:260px"></div>
<i class="cb on" style="left:1325px;top:212px"></i><span style="left:1337px;top:209px">Interpolate</span><i class="cb" style="left:1448px;top:212px"></i><span style="left:1460px;top:209px">Invert Color</span>
<i class="cb" style="left:1325px;top:229px"></i><span style="left:1337px;top:226px">White is invisible</span>
<div class="ln" style="left:1323px;top:247px;width:260px"></div>
<span style="left:1324px;top:253px">Brightness:</span><div class="sl" style="left:1401px;top:255px;width:123px"><i class="rg" style="left:8px;width:105px"></i><b class="tr" style="left:108px"></b></div><span style="left:1542px;top:253px">100%</span>
<div class="ln" style="left:1323px;top:272px;width:260px"></div>
<span style="left:1323px;top:276px">Save:</span><i class="ra" style="left:1378px;top:278px"></i><span style="left:1391px;top:276px">Internally</span><i class="ra on" style="left:1458px;top:278px"></i><span style="left:1471px;top:276px">Externally</span>

<!-- PREVIEW + PICKER LEFT -->
<div class="pv"><div class="pt"></div><span class="ptt">Preview: Sphere 1</span>
<div class="pa"><div class="pl"></div><div style="left:0;top:0;width:199px;height:12px;background:linear-gradient(#999,#9990);opacity:.5"></div>
<svg style="left:0;top:0" width="199" height="200"><polygon points="72,122 80,156 115,159 148,120" fill="#000"/><polygon points="115,159 148,181 182,142 148,118" fill="#5e5e5e"/><polygon points="182,142 198,126 198,153" fill="#5e5e5e"/></svg>
<svg style="left:45px;top:46px" width="109" height="109"><use href="#orb"/></svg>
<span style="left:5px;top:7px;color:#f0f0f0;text-shadow:0 0 1px #000">Sphere Preview</span></div>
<i class="cb on" style="left:4px;top:228px"></i><span style="left:16px;top:226px">Auto Update</span><i class="cb on" style="left:4px;top:244px"></i><span style="left:16px;top:243px">Checkerboard</span>
<div class="btn" style="left:126px;top:231px;width:69px;height:18px">Render</div>
</div>
<div class="cp">
<div style="left:0;top:0;width:250px;height:23px;background:#1f2d42"></div><i class="o" style="left:5px;top:7px"></i><span style="left:24px;top:2px;color:#ccd2da;font-size:14px;line-height:18px;text-shadow:0 0 2px #000">Color Picker</span>
<div style="left:0;top:23px;width:250px;height:17px;background:linear-gradient(90deg,#14223a,#6b7689 85%,#8a95a8)"></div>
<i style="left:4px;top:26px;width:8px;height:8px;border-radius:50%;background:#fff"></i><span style="left:121px;top:26px;color:#eef">HLS Wheel</span><span class="cv" style="left:192px;top:25px;color:#fff">»</span>
<i style="left:213px;top:25px;width:13px;height:15px;border:1.5px solid #111;background:linear-gradient(#111,#111) 2px 2px/5px 3px no-repeat"></i><i style="left:229px;top:25px;width:13px;height:15px;border:1.5px solid #111;background:linear-gradient(#111,#111) 2px 8px/7px 3px no-repeat"></i>
<i style="left:7px;top:63px;width:41px;height:21px;background:#2ade1e;border:1px solid #111"></i>
<span style="left:7px;top:128px">H :</span><div class="in" style="top:128px">31.86</div><span style="left:65px;top:129px">%</span>
<span style="left:7px;top:148px">L :</span><div class="in" style="top:148px">48.68</div><span style="left:65px;top:149px">%</span>
<span style="left:7px;top:168px">S :</span><div class="in" style="top:168px">78.38</div><span style="left:65px;top:169px">%</span>
<div style="left:79px;top:46px;width:117px;height:117px;border-radius:50%;background:conic-gradient(#ff0,#0f0 60deg,#0ff 120deg,#00f 180deg,#f0f 240deg,#f00 300deg,#ff0);-webkit-mask:radial-gradient(circle,transparent 47.500px,#000 48.500px);mask:radial-gradient(circle,transparent 47.500px,#000 48.500px)"></div>
<svg style="left:108px;top:66px" width="78" height="80"><use href="#tri"/></svg>
<i style="left:176px;top:67px;width:11px;height:11px;border-radius:50%;border:2px solid #000;background:#23d020"></i>
<i style="left:161px;top:101px;width:11px;height:11px;border-radius:50%;border:2px solid #000;background:#2ade1e;box-shadow:0 0 0 1px #fff"></i>
</div>

<!-- MENUS -->
<div class="menu" style="left:138px;top:116px;width:157px;height:600px">
<div class="hl" style="left:1px;top:307px;width:155px;height:17px"></div>
<span class="m" style="top:5px">None</span><span class="m" style="top:21px">Anything Goos</span><span class="m" style="top:37px">Color</span><span class="m" style="top:53px">Color Gradient</span><span class="m" style="top:69px">HairLight</span><span class="m" style="top:85px">Index of Refraction</span><span class="m" style="top:101px">Instance Randomizer</span><span class="m" style="top:117px">Normal Map</span><span class="m" style="top:133px">PBR Metal normal</span><span class="m" style="top:149px">Single Channel</span><span class="m" style="top:165px">Strobe</span><span class="m" style="top:181px">Texture Map</span><span class="m" style="top:197px">Triplanar</span><span class="m" style="top:213px">Value (0-100%)</span><span class="m" style="top:229px">Value (1-10000%)</span><span class="m" style="top:245px">Wireframe Pro</span><span class="m" style="top:261px">YAToon2 HairLight Shader</span><span class="m" style="top:277px">Veloute Tools</span><span class="m" style="top:293px">Operators</span><span class="m" style="top:309px;color:#f4efe8">Shoestring Shaders</span><span class="m" style="top:325px">Terrain Distribution</span><span class="m" style="top:341px">Tools</span><span class="m" style="top:357px">Terrain Tools</span><span class="m" style="top:373px">Shader Ops 2</span><span class="m" style="top:389px">Pattern Functions</span><span class="m" style="top:405px">Shader Ops</span><span class="m" style="top:421px">Shader Ops 2 Light Manglers</span><span class="m" style="top:437px">Natural Functions</span><span class="m" style="top:453px">Fenric</span><span class="m" style="top:469px">Projection Mapping</span><span class="m" style="top:485px">Environment Functions</span><span class="m" style="top:501px">Enhance:C</span><span class="m" style="top:517px">Enhance:C Operators</span><span class="m" style="top:533px">Noise Functions</span><span class="m" style="top:549px">Veloute Tile</span><span class="m" style="top:565px">Ground Control</span><span class="m" style="top:581px">Hair</span>
<span class="ar" style="top:276px">&gt;</span><span class="ar" style="top:292px">&gt;</span><span class="ar" style="top:308px">&gt;</span><span class="ar" style="top:324px">&gt;</span><span class="ar" style="top:340px">&gt;</span><span class="ar" style="top:356px">&gt;</span><span class="ar" style="top:372px">&gt;</span><span class="ar" style="top:388px">&gt;</span><span class="ar" style="top:404px">&gt;</span><span class="ar" style="top:420px">&gt;</span><span class="ar" style="top:436px">&gt;</span><span class="ar" style="top:452px">&gt;</span><span class="ar" style="top:468px">&gt;</span><span class="ar" style="top:484px">&gt;</span><span class="ar" style="top:500px">&gt;</span><span class="ar" style="top:516px">&gt;</span><span class="ar" style="top:532px">&gt;</span><span class="ar" style="top:548px">&gt;</span><span class="ar" style="top:564px">&gt;</span><span class="ar" style="top:580px">&gt;</span>
</div>
<div class="menu" style="left:295px;top:424px;width:106px;height:232px">
<div class="hl" style="left:1px;top:196px;width:103px;height:16px"></div>
<span class="m" style="top:5px">Angle</span><span class="m" style="top:21px">Drip</span><span class="m" style="top:37px">Easy Fresnel</span><span class="m" style="top:53px">Fresnel</span><span class="m" style="top:69px">Grayscale-Desat</span><span class="m" style="top:85px">Iridescent</span><span class="m" style="top:101px">Key</span><span class="m" style="top:117px">Lit</span><span class="m" style="top:133px">Location</span><span class="m" style="top:149px">MultiPass Control</span><span class="m" style="top:165px">Proximity</span><span class="m" style="top:181px">Spokes</span><span class="m" style="top:197px;color:#f4efe8">Super Mixer</span><span class="m" style="top:213px">Weave</span>
</div>

<!-- PREVIEW + PICKER RIGHT -->
<div style="left:888px;top:2px;width:889px;height:957px">
<div class="pv"><div class="pt"></div><span class="ptt">Preview: Sphere 1</span>
<div class="pa"><div class="pl"></div><div style="left:0;top:0;width:199px;height:12px;background:linear-gradient(#999,#9990);opacity:.5"></div>
<svg style="left:0;top:0" width="199" height="200"><polygon points="72,122 80,156 115,159 148,120" fill="#000"/><polygon points="115,159 148,181 182,142 148,118" fill="#5e5e5e"/><polygon points="182,142 198,126 198,153" fill="#5e5e5e"/></svg>
<svg style="left:45px;top:46px" width="109" height="109"><use href="#orb"/></svg>
<span style="left:5px;top:7px;color:#f0f0f0;text-shadow:0 0 1px #000">Sphere Preview</span></div>
<i class="cb on" style="left:4px;top:228px"></i><span style="left:16px;top:226px">Auto Update</span><i class="cb on" style="left:4px;top:244px"></i><span style="left:16px;top:243px">Checkerboard</span>
<div class="btn" style="left:126px;top:231px;width:69px;height:18px">Render</div>
</div></div>
<div style="left:889px;top:2px;width:889px;height:957px">
<div class="cp">
<div style="left:0;top:0;width:250px;height:23px;background:#1f2d42"></div><i class="o" style="left:5px;top:7px"></i><span style="left:24px;top:2px;color:#ccd2da;font-size:14px;line-height:18px;text-shadow:0 0 2px #000">Color Picker</span>
<div style="left:0;top:23px;width:250px;height:17px;background:linear-gradient(90deg,#14223a,#6b7689 85%,#8a95a8)"></div>
<i style="left:4px;top:26px;width:8px;height:8px;border-radius:50%;background:#fff"></i><span style="left:121px;top:26px;color:#eef">HLS Wheel</span><span class="cv" style="left:192px;top:25px;color:#fff">»</span>
<i style="left:213px;top:25px;width:13px;height:15px;border:1.5px solid #111;background:linear-gradient(#111,#111) 2px 2px/5px 3px no-repeat"></i><i style="left:229px;top:25px;width:13px;height:15px;border:1.5px solid #111;background:linear-gradient(#111,#111) 2px 8px/7px 3px no-repeat"></i>
<i style="left:7px;top:63px;width:41px;height:21px;background:#2ade1e;border:1px solid #111"></i>
<span style="left:7px;top:128px">H :</span><div class="in" style="top:128px">31.86</div><span style="left:65px;top:129px">%</span>
<span style="left:7px;top:148px">L :</span><div class="in" style="top:148px">48.68</div><span style="left:65px;top:149px">%</span>
<span style="left:7px;top:168px">S :</span><div class="in" style="top:168px">78.38</div><span style="left:65px;top:169px">%</span>
<div style="left:79px;top:46px;width:117px;height:117px;border-radius:50%;background:conic-gradient(#ff0,#0f0 60deg,#0ff 120deg,#00f 180deg,#f0f 240deg,#f00 300deg,#ff0);-webkit-mask:radial-gradient(circle,transparent 47.500px,#000 48.500px);mask:radial-gradient(circle,transparent 47.500px,#000 48.500px)"></div>
<svg style="left:108px;top:66px" width="78" height="80"><use href="#tri"/></svg>
<i style="left:176px;top:67px;width:11px;height:11px;border-radius:50%;border:2px solid #000;background:#23d020"></i>
<i style="left:161px;top:101px;width:11px;height:11px;border-radius:50%;border:2px solid #000;background:#2ade1e;box-shadow:0 0 0 1px #fff"></i>
</div></div>
<div style="left:887px;top:0;width:2px;height:959px;background:#fff"></div>
</div>

<!-- ANNOTATIONS -->
<svg style="left:0;top:0" width="1778" height="959" viewBox="0 0 1778 959">
<g fill="none" stroke="#c41fff" stroke-width="5" stroke-linecap="round" stroke-linejoin="round">
<path d="M333 109H260M282 94L258 110 280 130"/>
<path d="M112 433H140M125 414L140 433 122 453"/>
<path d="M470 622L403 627M423 612L395 627 438 646"/>
<path d="M1244 115Q1201 118 1172 127L1148 132M1175 112L1146 132 1175 142"/>
<path d="M1490 414Q1445 412 1392 395Q1380 367 1364 323Q1343 287 1319 250Q1282 220 1229 197Q1193 185 1152 182M1177 153L1152 182 1181 210"/>
<path d="M1490 414Q1421 417 1335 427Q1254 438 1156 448M1185 427L1154 448 1181 460"/>
<path d="M1148 250L1162 225 1175 250M1162 225V327L1181 422M1154 387L1181 422 1197 383"/>
</g>
<g fill="#c41fff" font-family="Liberation Sans, sans-serif">
<text x="334" y="122" font-size="42">1</text>
<text x="81" y="440" font-size="38">2</text>
<text x="477" y="628" font-size="39">3</text>
<text x="1250" y="127" font-size="44">4</text>
<text x="1499" y="430" font-size="42">5</text>
</g></svg>
</body></html>
